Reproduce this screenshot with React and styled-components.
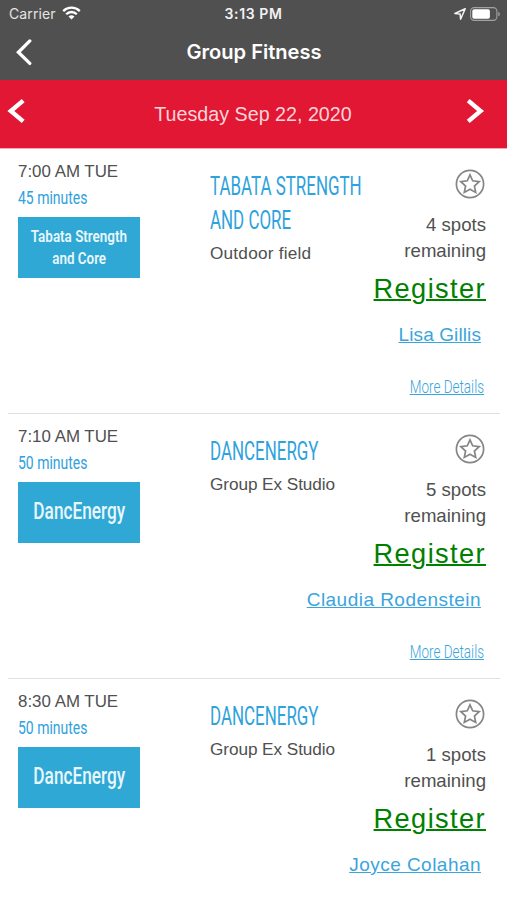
import React from "react";
import styled, { createGlobalStyle } from "styled-components";

const classes = [
    {
        time: "7:00 AM TUE",
        length: "45 minutes",
        badge: ["Tabata Strength", "and Core"],
        title: ["TABATA STRENGTH", "AND CORE"],
        room: "Outdoor field",
        roomTracking: 0.22,
        spots: 4,
        teacher: "Lisa Gillis",
        teacherTracking: 0.1,
        details: true,
    },
    {
        time: "7:10 AM TUE",
        length: "50 minutes",
        badge: ["DancEnergy"],
        title: ["DANCENERGY"],
        room: "Group Ex Studio",
        roomTracking: -0.07,
        spots: 5,
        teacher: "Claudia Rodenstein",
        teacherTracking: 0.47,
        details: true,
    },
    {
        time: "8:30 AM TUE",
        length: "50 minutes",
        badge: ["DancEnergy"],
        title: ["DANCENERGY"],
        room: "Group Ex Studio",
        roomTracking: -0.07,
        spots: 1,
        teacher: "Joyce Colahan",
        teacherTracking: 0.47,
        details: false,
    },
];

const WifiIcon = () => (
    <svg width="19" height="14" viewBox="0 0 19 14" fill="none" stroke="#fff" strokeWidth="2.3">
        <path d="M1.2 5.1a11.8 11.8 0 0 1 16.6 0" />
        <path d="M4.2 8.2a7.5 7.5 0 0 1 10.6 0" />
        <path d="M9.5 13.6 6.5 10.6a4.3 4.3 0 0 1 6 0z" fill="#fff" stroke="none" />
    </svg>
);

const LocationIcon = () => (
    <svg width="12" height="12" viewBox="0 0 12 12" fill="none" stroke="#f4f4f4" strokeWidth="1.5" strokeLinejoin="round">
        <path d="M11.2.8.9 5.5l5.2.4.5 5.3z" />
    </svg>
);

const BatteryIcon = () => (
    <svg width="31" height="14" viewBox="0 0 31 14">
        <rect x="0.6" y="0.6" width="26.3" height="12.8" rx="3.6" fill="none" stroke="#a2a2a2" strokeWidth="1.1" />
        <rect x="2.3" y="2.3" width="17.6" height="9.4" rx="1.8" fill="#fff" />
        <path d="M28.3 4.7c2 .8 2 3.8 0 4.6z" fill="#a2a2a2" />
    </svg>
);

const StarIcon = () => (
    <svg width="30" height="30" viewBox="0 0 30 30" fill="none" stroke="#858585">
        <circle cx="15" cy="15" r="13.6" strokeWidth="1.7" />
        <path
            d="M15 5.9 17.7 11.8 24.2 12.6 19.4 17 20.7 23.4 15 20.2 9.3 23.4 10.6 17 5.8 12.6 12.3 11.8z"
            strokeWidth="1.7"
        />
    </svg>
);

const App = () => {
    return (
        <>
            <GlobalStyle />
            <Screen>
                <StatusBar>
                    <Carrier>
                        Carrier
                        <WifiIcon />
                    </Carrier>
                    <Clock>3:13 PM</Clock>
                    <Indicators>
                        <LocationIcon />
                        <BatteryIcon />
                    </Indicators>
                </StatusBar>
                <NavBar>
                    <svg width="18" height="28" viewBox="0 0 18 28" fill="none" stroke="#fff" strokeWidth="3.3" strokeLinecap="round">
                        <path d="M15.8 2.9 4.4 14.3 15.8 25.4" />
                    </svg>
                    <h1>Group Fitness</h1>
                </NavBar>
                <DateBar>
                    <svg width="20" height="28" viewBox="0 0 20 28" fill="none" stroke="#fff" strokeWidth="4.4">
                        <path d="M17.2 3.6 4.8 14 17.2 24.4" />
                    </svg>
                    <span>Tuesday Sep 22, 2020</span>
                    <svg width="20" height="28" viewBox="0 0 20 28" fill="none" stroke="#fff" strokeWidth="4.4">
                        <path d="M2.2 3.6 14.6 14 2.2 24.4" />
                    </svg>
                </DateBar>
                <List>
                    {classes.map((item) => (
                        <ClassRow key={item.time}>
                            <TimeColumn>
                                <Time>{item.time}</Time>
                                <Length>{item.length}</Length>
                                <Badge $single={item.badge.length === 1}>
                                    {item.badge.map((line) => (
                                        <span key={line}>{line}</span>
                                    ))}
                                </Badge>
                            </TimeColumn>
                            <InfoColumn>
                                {item.title.map((line) => (
                                    <Title key={line}>{line}</Title>
                                ))}
                                <Room $tracking={item.roomTracking}>{item.room}</Room>
                            </InfoColumn>
                            <ActionColumn>
                                <Star>
                                    <StarIcon />
                                </Star>
                                <Spots>
                                    {item.spots} spots
                                    <br />
                                    remaining
                                </Spots>
                                <Register href="#">Register</Register>
                                <Teacher href="#" $tracking={item.teacherTracking}>
                                    {item.teacher}
                                </Teacher>
                                {item.details && <Details href="#">More Details</Details>}
                            </ActionColumn>
                        </ClassRow>
                    ))}
                </List>
            </Screen>
        </>
    );
};

const GlobalStyle = createGlobalStyle`
    * {
        box-sizing: border-box;
    }
    body {
        margin: 0;
        background: #fff;
        overflow: hidden;
    }
`;

const Screen = styled.div`
    width: 507px;
    height: 900px;
    overflow: hidden;
    background: #fff;
    color: #505050;
    font-family: "Liberation Sans", Arial, sans-serif;
`;

const StatusBar = styled.div`
    display: grid;
    grid-template-columns: 1fr auto 1fr;
    align-items: center;
    height: 27px;
    padding: 0 6px;
    background: #505050;
    color: #fff;
    font-family: Inter, sans-serif;
    font-size: 14px;
`;

const Carrier = styled.div`
    display: flex;
    align-items: center;
    gap: 6px;
    padding-left: 3px;
    letter-spacing: 0.1px;
    color: #e4e4e4;
    svg{
        margin-top: -2px;
    }
`;

const Clock = styled.div`
    font-weight: 600;
    letter-spacing: 0.6px;
    color: #f2f2f2;
`;

const Indicators = styled.div`
    display: flex;
    align-items: center;
    justify-content: flex-end;
    gap: 4px;
`;

const NavBar = styled.div`
    display: grid;
    grid-template-columns: 40px 1fr 40px;
    align-items: center;
    height: 53px;
    padding: 0 14px 3px;
    background: #505050;
    h1{
        margin: 0;
        padding-left: 1px;
        text-align: center;
        font-family: Inter, sans-serif;
        font-size: 20.1px;
        font-weight: 600;
        color: #fff;
    }
`;

const DateBar = styled.div`
    display: grid;
    grid-template-columns: 1fr auto 1fr;
    align-items: center;
    height: 69px;
    padding: 0 7px 0 6px;
    background: #e21733;
    border-bottom: 1px solid #f4a9b3;
    svg{
        margin-top: -6px;
    }
    svg:last-child{
        justify-self: end;
        margin-right: 14px;
    }
    span{
        font-size: 19.7px;
        color: #fbd5da;
    }
`;

const List = styled.div`
    padding: 0 7px 0 8px;
`;

const ClassRow = styled.div`
    display: grid;
    grid-template-columns: 192px 152px minmax(0, 1fr);
    height: 265px;
    padding: 11px 14px 0 10px;
    border-bottom: 1px solid #e0e0e0;
    white-space: nowrap;
`;

const TimeColumn = styled.div`
    display: flex;
    flex-direction: column;
    align-items: flex-start;
`;

const InfoColumn = styled.div`
    display: flex;
    flex-direction: column;
    align-items: flex-start;
    padding-top: 10px;
`;

const ActionColumn = styled.div`
    display: flex;
    flex-direction: column;
    align-items: flex-end;
    padding-top: 9px;
`;

const Time = styled.div`
    font-size: 16.9px;
    line-height: 24px;
`;

// Condensed headings are a regular face squeezed horizontally
const Length = styled.div`
    font-family: Roboto, sans-serif;
    font-weight: 450;
    font-size: 18.5px;
    line-height: 29px;
    color: #2ea2dc;
    transform: scaleX(0.755);
    transform-origin: left;
`;

const Badge = styled.div`
    display: flex;
    flex-direction: column;
    align-items: center;
    justify-content: center;
    width: 122px;
    height: 61px;
    margin-top: 4px;
    padding-bottom: 2px;
    background: #2fa8d5;
    color: #e8f7fd;
    span{
        font-family: Roboto, sans-serif;
        font-weight: ${({ $single }) => ($single ? 500 : 600)};
        font-size: ${({ $single }) => ($single ? "23px" : "17px")};
        line-height: ${({ $single }) => ($single ? "30px" : "22px")};
        transform: scaleX(${({ $single }) => ($single ? 0.75 : 0.79)});
    }
`;

const Title = styled.div`
    font-family: Roboto, sans-serif;
    font-weight: 400;
    font-size: 25px;
    line-height: 34px;
    color: #2ea2dc;
    transform: scaleX(0.677);
    transform-origin: left;
`;

const Room = styled.div`
    margin-top: 3px;
    font-size: 17.2px;
    line-height: 24px;
    letter-spacing: ${({ $tracking }) => $tracking}px;
`;

const Star = styled.div`
    height: 30px;
    margin-right: 1px;
`;

const Spots = styled.div`
    margin-top: 13px;
    font-size: 18.6px;
    line-height: 26px;
    text-align: right;
`;

const Register = styled.a`
    margin-top: 8px;
    font-size: 27.2px;
    line-height: 34px;
    letter-spacing: 1.4px;
    text-decoration-thickness: 2px;
    color: #008000;
`;

const Teacher = styled.a`
    margin: 17px 5px 0 0;
    font-size: 19px;
    line-height: 24px;
    letter-spacing: ${({ $tracking }) => $tracking}px;
    color: #3aa5dc;
`;

const Details = styled.a`
    margin: 27px 2px 0 0;
    font-family: Roboto, sans-serif;
    font-weight: 300;
    font-size: 18px;
    line-height: 26px;
    color: #3aa5dc;
    transform: scaleX(0.75);
    transform-origin: right;
`;

export default App;
